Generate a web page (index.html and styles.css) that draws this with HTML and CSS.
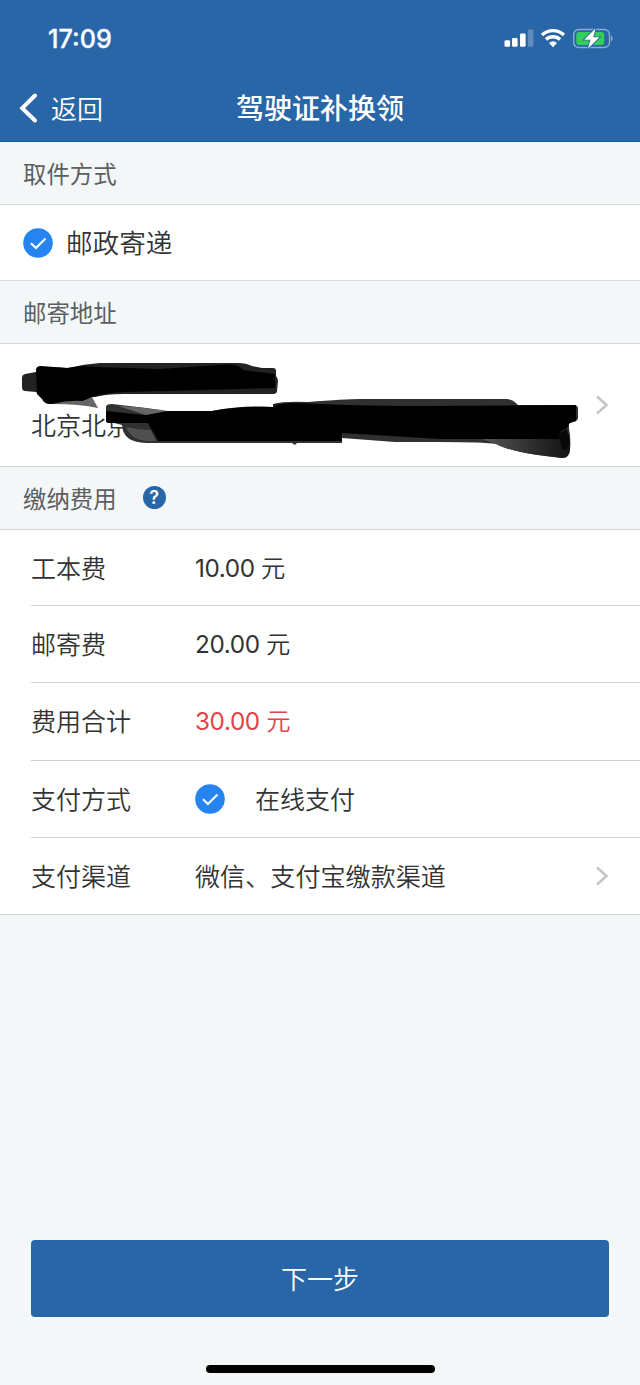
FILE: index.html
```html
<!DOCTYPE html>
<html lang="zh-CN">
<head>
<meta charset="utf-8">
<title>驾驶证补换领</title>
<link rel="stylesheet" href="styles.css">
</head>
<body>
<div class="screen">
  <header class="header">
    <div class="status">
      <span class="time">17:09</span>
      <svg class="indicators" width="112" height="24" viewBox="0 0 112 24">
        <g fill="#fff">
          <rect x="3.500" y="14.300" width="5.600" height="6.500" rx="1.300"/>
          <rect x="11" y="12" width="5.600" height="8.800" rx="1.300"/>
          <rect x="19" y="7.500" width="5.600" height="13.300" rx="1.300"/>
          <rect x="26.800" y="3.500" width="5.600" height="17.300" rx="1.300" opacity=".25"/>
        </g>
        <g fill="none" stroke="#fff" stroke-width="3.400">
          <path d="M41 8.900a16.300 16.300 0 0 1 22 0"/>
          <path d="M45 13.600a10.200 10.200 0 0 1 14 0"/>
        </g>
        <path d="M48 17a6.200 6.200 0 0 1 8 0L52 21.300z" fill="#fff"/>
        <rect x="72.700" y="3.500" width="35.800" height="18" rx="5" fill="none" stroke="#fff" stroke-opacity=".45" stroke-width="1.400"/>
        <rect x="75.300" y="6" width="28" height="13" rx="3" fill="#34ce59"/>
        <path d="M110 9.500c2.300.8 2.300 5 0 5.800z" fill="#fff" opacity=".45"/>
        <path d="M94.500 2.500 83.200 13.700h6.200L87 22.500 98.500 11.300h-6.200z" fill="#fff" stroke="#2966a8" stroke-width="1.800" paint-order="stroke"/>
      </svg>
    </div>
    <nav class="nav">
      <a class="back">
        <svg width="20" height="32" viewBox="0 0 20 32"><path d="M17 3.500 4.200 16.200 17 28.500" fill="none" stroke="#fff" stroke-width="4" stroke-linecap="round"/></svg>
        <span class="label">返回</span>
      </a>
      <h1 class="title">驾驶证补换领</h1>
    </nav>
  </header>

  <h2 class="section">取件方式</h2>
  <div class="delivery">
    <svg class="check" viewBox="0 0 30 30"><circle cx="15" cy="15" r="14.800" fill="#2684f0"/><path d="M8 15.200 12.900 20 22.500 10.500" fill="none" stroke="#fff" stroke-width="2.100"/></svg>
    <span class="label">邮政寄递</span>
  </div>

  <h2 class="section">邮寄地址</h2>
  <div class="address">
    <span class="address-text">北京北京市</span>
    <svg class="arrow" viewBox="0 0 14 22"><path d="M2 2.500 11.500 11 2 19.500" fill="none" stroke="#c3c4c6" stroke-width="2.500"/></svg>
    <svg class="redaction" viewBox="0 344 640 122">
      <defs>
        <linearGradient id="tail" x1="0" x2="1">
          <stop offset="0" stop-color="#555"/>
          <stop offset="1" stop-color="#111"/>
        </linearGradient>
      </defs>
      <path d="M22 377Q22 375 25 374L36 372Q48 366 68 368Q84 364 100 363H238Q246 363 252 366L262 368H273Q276 368 276 371V376Q278 378 278 381L277 391Q277 394 273 394H124Q106 394 95 397L45 400 36 392 25 391Q22 391 22 387z" fill="#222"/>
      <path d="M36 370Q36 366 41 366L67 368Q83 365 96 367L160 369 220 365Q238 363 243 370L275 374V388L124 392Q104 393 92 397Q84 404 50 404Q44 404 42 399L37 394z" fill="#000"/>
      <path d="M52 404Q68 400 83 401L92 397 98 408Q80 404 52 404z" fill="#666"/>
      <path d="M106 407Q106 404 112 404Q140 407 167 411H212Q240 405 273 407V404Q284 401 308 402Q345 399 360 399H506Q513 399 518 405H574Q578 405 578 409V418Q578 422 569 423V429Q571 436 570 449Q570 458 562 458C542 456 514 453 496 444Q484 442 440 442H395Q368 440 342 438V443H297L295 445 292 443H150C132 443 123 438 122 425L106 421z" fill="#303030"/>
      <path d="M106 411 144 415 168 411H212Q240 406 273 407Q274 403 300 403Q350 406 420 406L576 405V421Q568 422 567 428L560 432V439H440L342 433V441H158L148 423H108Q106 423 106 420z" fill="#000"/>
      <path d="M118 406Q145 407 167 411L146 415z" fill="#666"/>
      <path d="M126 427Q139 430 151 430L156 441Q132 443 126 427z" fill="#505050"/>
      <path d="M482 439H559L566 430Q571 436 570 449Q569 458 562 458C540 455 514 453 496 444z" fill="url(#tail)"/>
      <path d="M558 434 567 429 569 440Q569 450 563 450z" fill="#080808"/>
    </svg>
  </div>

  <h2 class="section">缴纳费用
    <span class="help">?</span>
  </h2>
  <dl class="fees">
    <div class="row"><dt>工本费</dt><dd class="amount">10.00 <span class="unit">元</span></dd></div>
    <div class="row"><dt>邮寄费</dt><dd class="amount">20.00 <span class="unit">元</span></dd></div>
    <div class="row"><dt>费用合计</dt><dd class="amount total">30.00 <span class="unit">元</span></dd></div>
    <div class="row"><dt>支付方式</dt><dd class="option">
      <svg class="check" viewBox="0 0 30 30"><circle cx="15" cy="15" r="14.800" fill="#2684f0"/><path d="M8 15.200 12.900 20 22.500 10.500" fill="none" stroke="#fff" stroke-width="2.100"/></svg>
      <span class="label">在线支付</span></dd></div>
    <div class="row"><dt>支付渠道</dt><dd class="channel">微信、支付宝缴款渠道</dd>
      <svg class="arrow" viewBox="0 0 14 22"><path d="M2 2.500 11.500 11 2 19.500" fill="none" stroke="#c3c4c6" stroke-width="2.500"/></svg></div>
  </dl>

  <footer class="footer">
    <button class="next">下一步</button>
    <div class="home-bar"></div>
  </footer>
</div>
</body>
</html>
```
FILE: styles.css
```css
* { box-sizing: border-box; }
body {
  margin: 0;
  background: #f3f7f8;
  color: #333;
  font-family: Inter, "Noto Sans CJK SC", sans-serif;
  font-weight: 350;
}
.screen { display: flex; flex-direction: column; width: 640px; height: 1385px; }
.header { height: 142px; background: #2966a8; color: #fff; border-bottom: 1px solid #2159a0; }
.status {
  display: flex; align-items: center; justify-content: space-between;
  height: 76px; padding: 0 27px 0 48px;
}
.time { padding-top: 2px; font-size: 25.2px; font-weight: 500; line-height: 30px; -webkit-text-stroke: .3px; }
.nav {
  display: grid; grid-template-columns: 1fr auto 1fr; align-items: center;
  height: 64px; padding: 0 18px;
}
.back { display: flex; align-items: center; gap: 13px; font-size: 26px; }
.label { padding-bottom: 2px; }
.title { margin: 0; padding-top: 2px; font-size: 28px; font-weight: 500; line-height: 40px; }
.section {
  display: flex; align-items: center;
  height: 63px; margin: 0; padding: 0 23px 1px;
  border-bottom: 1px solid #d3d7d9;
  color: #5c5e60; font-size: 23.4px; font-weight: 400;
}
.delivery {
  display: flex; align-items: center; gap: 13px;
  height: 76px; padding: 0 23px;
  background: #fff; border-bottom: 1px solid #d9dbdc; font-size: 26.6px;
}
.check { display: block; width: 30px; height: 30px; flex: none; }
.address {
  position: relative; display: flex; align-items: center; justify-content: space-between;
  height: 123px; padding: 0 31px;
  background: #fff; border-bottom: 1px solid #d3d7d9; font-size: 25px;
}
.address-text { padding-top: 38px; }
.redaction { position: absolute; top: 0; left: 0; width: 640px; height: 122px; filter: blur(.5px); }
.arrow { width: 14px; height: 22px; flex: none; }
.help {
  display: flex; align-items: center; justify-content: center;
  width: 23px; height: 23px; margin-left: 26px; border-radius: 50%;
  background: #2966a8; color: #fff; font-size: 18px; font-weight: 600;
}
.fees { margin: 0; padding-left: 31px; background: #fff; border-bottom: 1px solid #d0d4d6; font-size: 25px; }
.row { display: flex; align-items: center; height: 77.3px; padding-right: 31px; border-bottom: 1px solid #d0d1d3; }
.row:first-child { height: 76px; }
.row:last-child { height: 76px; border-bottom: 0; }
dt { width: 164px; padding-bottom: 2px; }
dd { flex: 1; margin: 0; }
.option { display: flex; align-items: center; gap: 30px; }
.channel { padding-bottom: 2px; font-size: 25.1px; }
.amount { padding-bottom: 3px; font-weight: 400; font-size: 24.3px; letter-spacing: -.4px; }
.unit { font-weight: 350; }
.total { color: #e04348; }
.footer { display: flex; flex-direction: column; align-items: center; margin-top: auto; padding: 0 31px 12px; }
.next {
  width: 578px; height: 77px; padding: 0 0 3px; border: 0; border-radius: 4px;
  background: #2966a8; color: #fff; font: inherit; font-size: 26px;
}
.home-bar { width: 229px; height: 8px; margin-top: 48px; border-radius: 4px; background: #000; }
```
